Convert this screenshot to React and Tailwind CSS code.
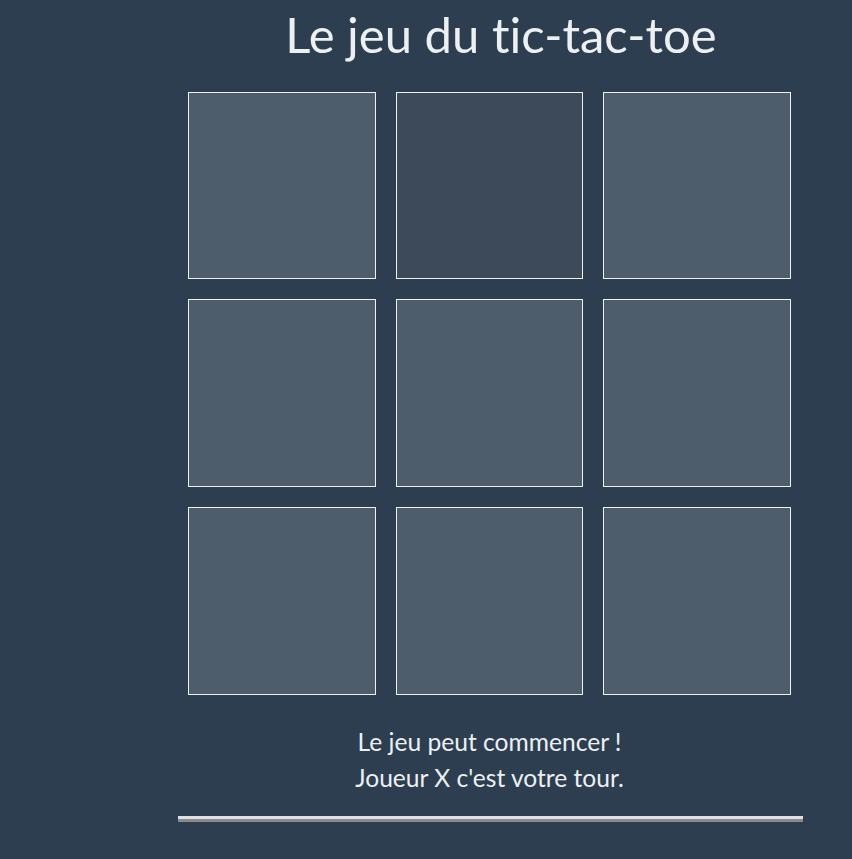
export default function App() {
  const cells = [0, 1, 2, 3, 4, 5, 6, 7, 8]

  return (
    <div
      className="min-h-[859px] w-full bg-[#2c3e50] text-[#ecf0f1]"
      style={{ fontFamily: 'Lato, "Open Sans", sans-serif', fontVariantLigatures: 'none' }}
    >
      <h1 className="pt-[6px] pl-[150px] text-center text-[49px] leading-[1.18] font-normal">Le jeu du tic-tac-toe</h1>

      <div className="ml-[178px] w-[625px] pl-[10px] pr-[12px] pt-[28px]">
        <div className="grid grid-cols-3 gap-[20px]">
          {cells.map((i) => (
            <div
              key={i}
              className={`aspect-square border border-[#f0f0f0] ${i === 1 ? 'bg-[#3d4a59]' : 'bg-[#4e5d6c]'}`}
            />
          ))}
        </div>

        <div className="mt-[29px] text-center text-[24.6px] leading-[36px]">
          <p>Le jeu peut commencer !</p>
          <p>Joueur X c'est votre tour.</p>
        </div>
      </div>

      <div className="ml-[178px] mt-[20px] w-[625px] border-t-[3px] border-b-[3px] border-t-[#e0e0e0] border-b-[#8a8a8a]" />
    </div>
  )
}
